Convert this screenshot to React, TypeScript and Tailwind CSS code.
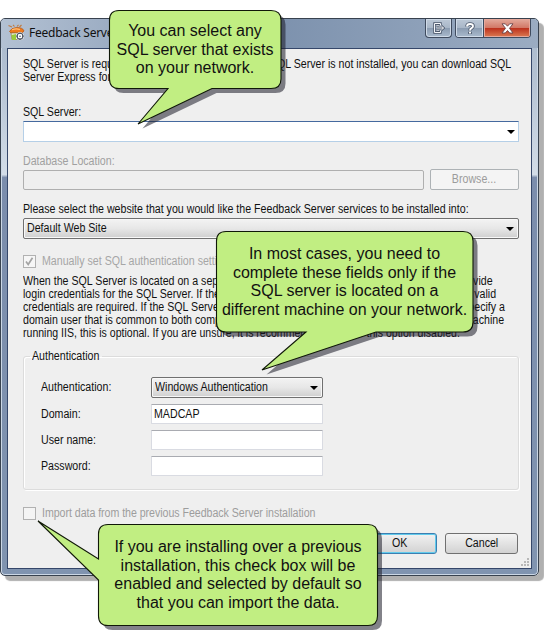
import React from "react";

const field = "border border-[#d9dbe2] border-t-[#a9abb1] bg-white rounded-[1px]";
const combo =
  "flex items-center justify-between rounded-[2px] border border-[#707070] bg-linear-to-b from-[#f3f3f3] via-[#e7e7e7] to-[#cfcfcf] shadow-[inset_0_0_0_1px_#f8f8f8]";

function Arrow() {
  return (
    <svg width="8" height="4" viewBox="0 0 8 4" className="shrink-0">
      <path d="M0 0H8L4 4Z" fill="#000" />
    </svg>
  );
}

function Line({ children, className = "" }: { children: React.ReactNode; className?: string }) {
  return <div className={"w-max whitespace-nowrap " + className}>{children}</div>;
}

/* Condensed dialog text, anchored at its left edge */
function Label({ children, className = "" }: { children: React.ReactNode; className?: string }) {
  return <Line className={"origin-left scale-x-[0.886] " + className}>{children}</Line>;
}

/* A line whose two halves run to the edges of its own width */
function SplitLine({ start, end, width }: { start: string; end: string; width: string }) {
  return (
    <div className={"flex origin-left scale-x-[0.886] justify-between whitespace-nowrap " + width}>
      <span>{start}</span>
      <span>{end}</span>
    </div>
  );
}

function TitleIcon() {
  return (
    <svg width="17" height="17" viewBox="0 0 17 17">
      <path d="M.5 1.500L4 3M5 .8L6.500 2.500M10.500 .8L9 2.500M13.500 1L11.500 3" stroke="#c07a3e" strokeWidth="1.100" />
      <path d="M1.500 7.500Q3 4 8.500 3.500Q15 3.500 16 7L14 8.800L3 9Z" fill="#ef7a1c" stroke="#b4500b" strokeWidth=".7" />
      <path d="M4 5.700Q8 4 12 5.500" stroke="#ffc078" strokeWidth="1.200" fill="none" />
      <path d="M3 9H14V15.500H4Z" fill="#f3f1df" stroke="#8a7448" strokeWidth=".7" />
      <path d="M3.500 11L8 10V16H4Z" fill="#9acb3c" />
      <circle cx="12" cy="12.200" r="3.600" fill="#fff" stroke="#fff" />
      <circle cx="12" cy="12.200" r="2.900" fill="#fff" stroke="#4d5563" strokeWidth="1.100" />
      <path d="M12 8.500V10M12 14.500V16M8.300 12.200H10M14 12.200H15.700" stroke="#4d5563" strokeWidth="1.200" />
      <circle cx="12" cy="12.200" r=".8" fill="#4a5260" />
    </svg>
  );
}

function TitleButtons() {
  return (
    <div className="mr-[7px] flex h-[19px] gap-[3px]">
      <div className="flex w-[27px] items-center justify-center rounded-b-[4px] border border-t-0 border-[#3f4b5e] bg-[linear-gradient(#bcc8d6_0%,#a9b7c8_48%,#8a9bb0_50%,#a9bacd_100%)] shadow-[inset_0_0_0_1px_#d0dbe8]">
        <svg width="12" height="12" viewBox="0 0 12 12" fill="none">
          <path d="M7.500 3.500V1.500H1.500V10.500H7.500V8.500M4 6H10.500M8.300 4L10.500 6L8.300 8M3.500 3.800H6M3.500 8.200H6" stroke="#4b576a" strokeWidth="2.400" />
          <path d="M7.500 3.500V1.500H1.500V10.500H7.500V8.500M4 6H10.500M8.300 4L10.500 6L8.300 8M3.500 3.800H6M3.500 8.200H6" stroke="#f5f7fa" strokeWidth="1" />
        </svg>
      </div>
      <div className="flex w-[76px] overflow-hidden rounded-b-[4px] border border-t-0 border-[#3f4b5e]">
        <div className="flex w-[28px] items-center justify-center border-r border-[#3f4b5e] bg-[linear-gradient(#bcc8d6_0%,#a9b7c8_48%,#8a9bb0_50%,#a9bacd_100%)] shadow-[inset_0_0_0_1px_#d0dbe8]">
          <svg width="10" height="13" viewBox="0 0 10 13" fill="none">
            <path d="M2 4.500Q2 2 5 2Q8 2 8 4.200Q8 5.400 6.500 6.200Q5 7 5 8.500M5 9.800V12" stroke="#4b576a" strokeWidth="3.600" />
            <path d="M2 4.500Q2 2 5 2Q8 2 8 4.200Q8 5.400 6.500 6.200Q5 7 5 8.500M5 9.800V11.600" stroke="#fff" strokeWidth="1.900" />
          </svg>
        </div>
        <div className="flex flex-1 items-center justify-center bg-[linear-gradient(#e3aa9c_0%,#d27967_48%,#bb2f1b_50%,#dc7a52_100%)] shadow-[inset_0_0_0_1px_#e6a89b]">
          <svg width="13" height="11" viewBox="0 0 13 11">
            <path d="M1 .8H4.300L6.500 3.200L8.700 .8H12L8.500 5.300L12 10H8.700L6.500 7.500L4.300 10H1L4.500 5.300Z" fill="#fff" stroke="#6a4348" strokeWidth=".9" />
          </svg>
        </div>
      </div>
    </div>
  );
}

function Callout({ path, shadow, lines, className, box }: { path: string; shadow?: string; lines: string[]; className: string; box: string }) {
  return (
    <div className={"absolute " + className}>
      <svg className="absolute left-0 top-0 overflow-visible" width="1" height="1">
        <path d={shadow ?? path} transform="translate(4.500 4.500)" fill="#1c1c28" fillOpacity=".55" />
        <path d={path} fill="#c1ee82" stroke="#101808" strokeWidth="1.100" />
      </svg>
      <div className={"relative flex flex-col items-center text-[16px] leading-[18.500px] text-[#111] " + box}>
        {lines.map((text) => (
          <Line key={text}>{text}</Line>
        ))}
      </div>
    </div>
  );
}

export default function App() {
  return (
    <div className="relative h-[640px] w-[544px] overflow-hidden bg-white font-['Liberation_Sans',Arial,sans-serif] text-[12px] leading-[13px] text-[#111]">
      <div className="pt-[18px]">
        <div className="relative h-[558px] w-[539px] rounded-[5px] border border-[#38424f] bg-[linear-gradient(#a7b7ca_0%,#b3c1d2_10%,#d3dde8_28%,#7b8dac_28.500%,#8094b0_100%)] shadow-[5px_5px_1px_#b0b0b0] ring-1 ring-inset ring-[#cbd7e5]">
          <header className="flex h-[29px] items-start justify-between rounded-t-[4px] bg-linear-to-r from-[#b3c1d3] via-[#7c91ad] to-[#9bacc2]">
            <div className="flex items-center pl-[7px] pt-[5px]">
              <TitleIcon />
              <Line className="ml-[4px] font-['Noto_Sans',sans-serif] text-[12px] tracking-[-0.25px]">Feedback Server Setup</Line>
            </div>
            <TitleButtons />
          </header>

          <main className="ml-[6px] flex h-[521px] w-[525px] flex-col border border-[#35476a] bg-[#efefef] pl-[15px]">
            <div className="mt-[9px]">
              <SplitLine width="w-[551px]" start="SQL Server is required for Feedback Server." end="If SQL Server is not installed, you can download SQL" />
              <Label>Server Express for free.</Label>
            </div>
            <Label className="mt-[22px]">SQL Server:</Label>
            <div className="mt-[2px] flex h-[21px] w-[496px] items-center justify-end border border-[#b5cfe7] border-t-[#45699e] bg-white pr-[3px]">
              <Arrow />
            </div>
            <Label className="mt-[13px] text-[#a0a0a0]">Database Location:</Label>
            <div className="mt-[1px] flex w-[496px] items-center justify-between">
              <div className="h-[20px] w-[401px] rounded-[2px] border border-[#afafaf]" />
              <div className="flex h-[21px] w-[89px] items-center justify-center rounded-[2px] border border-[#adb2b5] bg-[#f4f4f4] text-[#9b9b9b]">
                <Line className="scale-x-[0.886]">Browse...</Line>
              </div>
            </div>
            <Label className="mt-[13px]">Please select the website that you would like the Feedback Server services to be installed into:</Label>
            <div className={combo + " mt-[2px] h-[21px] w-[496px] pl-[3px] pr-[4px]"}>
              <Label>Default Web Site</Label>
              <Arrow />
            </div>
            <div className="mt-[16px] flex items-center text-[#a6a6a6]">
              <div className="mr-[6px] flex size-[13px] items-center justify-center border border-[#b1b1b1] bg-[#f6f6f6]">
                <svg width="9" height="9" viewBox="0 0 9 9" fill="none">
                  <path d="M1 4.500L3.200 7.500L7.500 .8" stroke="#a3a3a3" strokeWidth="1.700" />
                </svg>
              </div>
              <Label>Manually set SQL authentication settings</Label>
            </div>
            <div className="mt-[7px]">
              <SplitLine width="w-[530px]" start="When the SQL Server is located on a separate machine" end="from the IIS server, you must provide" />
              <SplitLine width="w-[534px]" start="login credentials for the SQL Server. If the SQL Server" end="is in the same domain, then valid" />
              <SplitLine width="w-[544px]" start="credentials are required. If the SQL Server is not in" end="the same domain, you must specify a" />
              <SplitLine width="w-[543px]" start="domain user that is common to both computers." end="If the server is on the same machine" />
              <Line className="origin-left scale-x-[0.879]">running IIS, this is optional. If you are unsure, it is recommended to leave this option disabled.</Line>
            </div>

            <fieldset className="mt-[10px] h-[140px] w-[496px] rounded-[3px] border border-[#dcdcdc] pl-[17px] shadow-[inset_1px_1px_0_#fff,1px_1px_0_#fff]">
              <legend className="-ml-[11px] w-[72px] px-[2px]">
                <Label>Authentication</Label>
              </legend>
              <div className="mt-[14px] flex items-center">
                <Label className="min-w-[110px]">Authentication:</Label>
                <div className={combo + " h-[21px] w-[172px] pl-[3px] pr-[4px]"}>
                  <Label>Windows Authentication</Label>
                  <Arrow />
                </div>
              </div>
              <div className="mt-[6px] flex items-center">
                <Label className="min-w-[110px]">Domain:</Label>
                <div className={field + " flex h-[20px] w-[172px] items-center pl-[2px]"}>
                  <Label>MADCAP</Label>
                </div>
              </div>
              <div className="mt-[6px] flex items-center">
                <Label className="min-w-[110px]">User name:</Label>
                <div className={field + " h-[20px] w-[172px]"} />
              </div>
              <div className="mt-[6px] flex items-center">
                <Label className="min-w-[110px]">Password:</Label>
                <div className={field + " h-[20px] w-[172px]"} />
              </div>
            </fieldset>

            <div className="mt-[17px] flex items-center text-[#9d9d9d]">
              <div className="mr-[6px] size-[13px] border border-[#b1b1b1] bg-[#f4f4f4]" />
              <Label className="tracking-[-0.050px]">Import data from the previous Feedback Server installation</Label>
            </div>
            <div className="mt-[13px] flex w-[495px] justify-end gap-[8px]">
              <div className="flex h-[21px] w-[74px] items-center justify-center rounded-[3px] border border-[#3c7fb1] bg-linear-to-b from-[#f2f2f2] to-[#d2d2d2] shadow-[inset_0_0_0_1px_#62cbec]">
                <Line className="scale-x-[0.886]">OK</Line>
              </div>
              <div className="flex h-[21px] w-[73px] items-center justify-center rounded-[3px] border border-[#707070] bg-linear-to-b from-[#f4f4f4] to-[#d2d2d2]">
                <Line className="scale-x-[0.886]">Cancel</Line>
              </div>
            </div>
            <svg className="ml-auto mr-[2px] mt-auto mb-[2px]" width="8" height="8" viewBox="0 0 8 8" fill="#b8b8b8">
              <path d="M6 0h2v2h-2zM3 3h2v2h-2zM6 3h2v2h-2zM0 6h2v2h-2zM3 6h2v2h-2zM6 6h2v2h-2z" />
            </svg>
          </main>
        </div>
      </div>

      <Callout
        className="left-[109px] top-[10px]"
        box="w-[172px] pt-[12px]"
        path="M10 .500H162Q172 .500 172 10V69Q172 78.500 162 78.500H103L29 114L59 78.500H10Q.500 78.500 .500 69V10Q.500 .500 10 .500Z"
        lines={["You can select any", "SQL server that exists", "on your network."]}
      />
      <Callout
        className="left-[216px] top-[231px]"
        box="w-[257px] pt-[14px]"
        path="M10 .500H247Q257 .500 257 10V91Q257 101 247 101H160L46 139L90 101H10Q.500 101 .500 91V10Q.500 .500 10 .500Z"
        lines={["In most cases, you need to", "complete these fields only if the", "SQL server is located on a", "different machine on your network."]}
      />
      <Callout
        className="left-[98px] top-[524px]"
        box="w-[280px] pt-[14px]"
        path="M10 .500H270Q279.500 .500 279.500 10V92Q279.500 101.500 270 101.500H10Q.500 101.500 .500 92V56L-60 -3L.500 35V10Q.500 .500 10 .500Z"
        shadow="M10 .500H270Q279.500 .500 279.500 10V92Q279.500 101.500 270 101.500H10Q.500 101.500 .500 92V10Q.500 .500 10 .500Z"
        lines={["If you are installing over a previous", "installation, this check box will be", "enabled and selected by default so", "that you can import the data."]}
      />
    </div>
  );
}
